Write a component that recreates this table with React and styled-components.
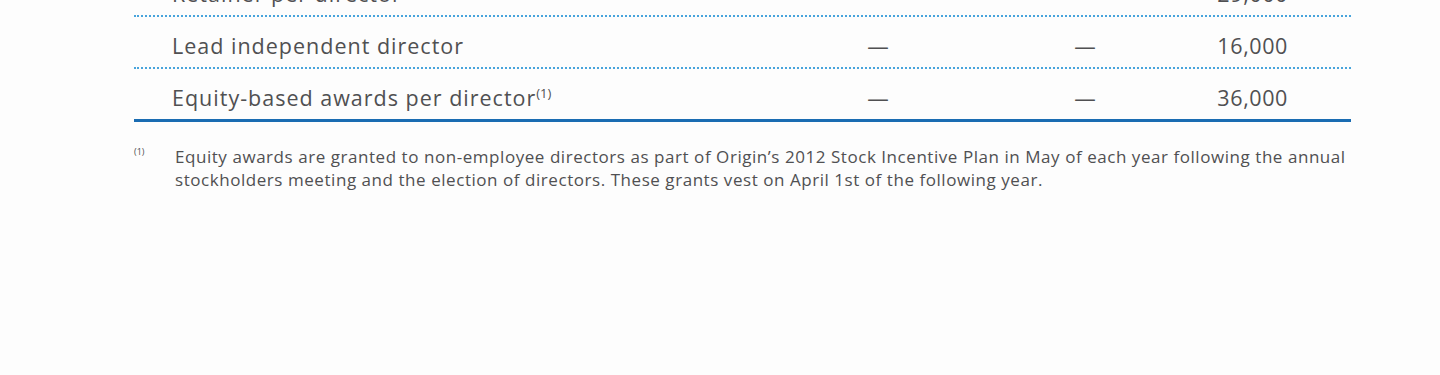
import React from "react";
import styled, { createGlobalStyle } from "styled-components";

const GlobalStyle = createGlobalStyle`
  html, body {
    margin: 0;
    padding: 0;
    background: #fdfdfd;
  }
  body {
    font-family: "Open Sans", "Noto Sans", sans-serif;
    color: #505052;
    overflow: hidden;
  }
`;

const Page = styled.div`
  width: 1440px;
  height: 375px;
  padding: 0 89px 0 134px;
  box-sizing: border-box;
`;

const Table = styled.div`
  margin-top: -35px;
  border-bottom: 3px solid #1a6cb2;
`;

const Row = styled.div`
  display: grid;
  grid-template-columns: 1fr 308px 106px 150px;
  align-items: center;
  padding: 6px 63px 0 38px;
  box-sizing: border-box;
  font-size: 21.5px;
  letter-spacing: 1px;
  border-bottom: ${(p) => (p.last ? "none" : "2px dotted #48a4dc")};
  height: ${(p) => (p.last ? "50px" : "52px")};
`;

const Label = styled.div`
  white-space: nowrap;
`;

const Sup = styled.sup`
  font-size: 13px;
  letter-spacing: 0;
  vertical-align: 8px;
  line-height: 0;
`;

const Cell = styled.div`
  text-align: ${(p) => (p.right ? "right" : "center")};
  letter-spacing: ${(p) => (p.right ? "0.6px" : "0")};
`;

const Note = styled.div`
  display: flex;
  margin-top: 23px;
  margin-right: -4px;
  font-size: 17px;
  letter-spacing: 0.55px;
  line-height: 23px;
`;

const NoteMark = styled.div`
  width: 41px;
  flex: none;
  font-size: 9px;
  letter-spacing: 0;
  line-height: 12px;
  padding-top: 1px;
`;

const NoteText = styled.p`
  margin: 0;
  flex: 1;
`;

const rows = [
  { label: "Retainer per director", a: "", b: "", c: "29,000" },
  { label: "Lead independent director", a: "—", b: "—", c: "16,000" },
  { label: "Equity-based awards per director", sup: "(1)", a: "—", b: "—", c: "36,000" },
];

const App = () => (
  <Page>
    <GlobalStyle />
    <Table>
      {rows.map((r, i) => (
        <Row key={r.label} last={i === rows.length - 1}>
          <Label>
            {r.label}
            {r.sup && <Sup>{r.sup}</Sup>}
          </Label>
          <Cell>{r.a}</Cell>
          <Cell>{r.b}</Cell>
          <Cell right>{r.c}</Cell>
        </Row>
      ))}
    </Table>
    <Note>
      <NoteMark>(1)</NoteMark>
      <NoteText>
        Equity awards are granted to non-employee directors as part of Origin’s 2012 Stock Incentive Plan in May of each year following the annual stockholders meeting and the election of directors. These grants vest on April 1st of the following year.
      </NoteText>
    </Note>
  </Page>
);

export default App;
